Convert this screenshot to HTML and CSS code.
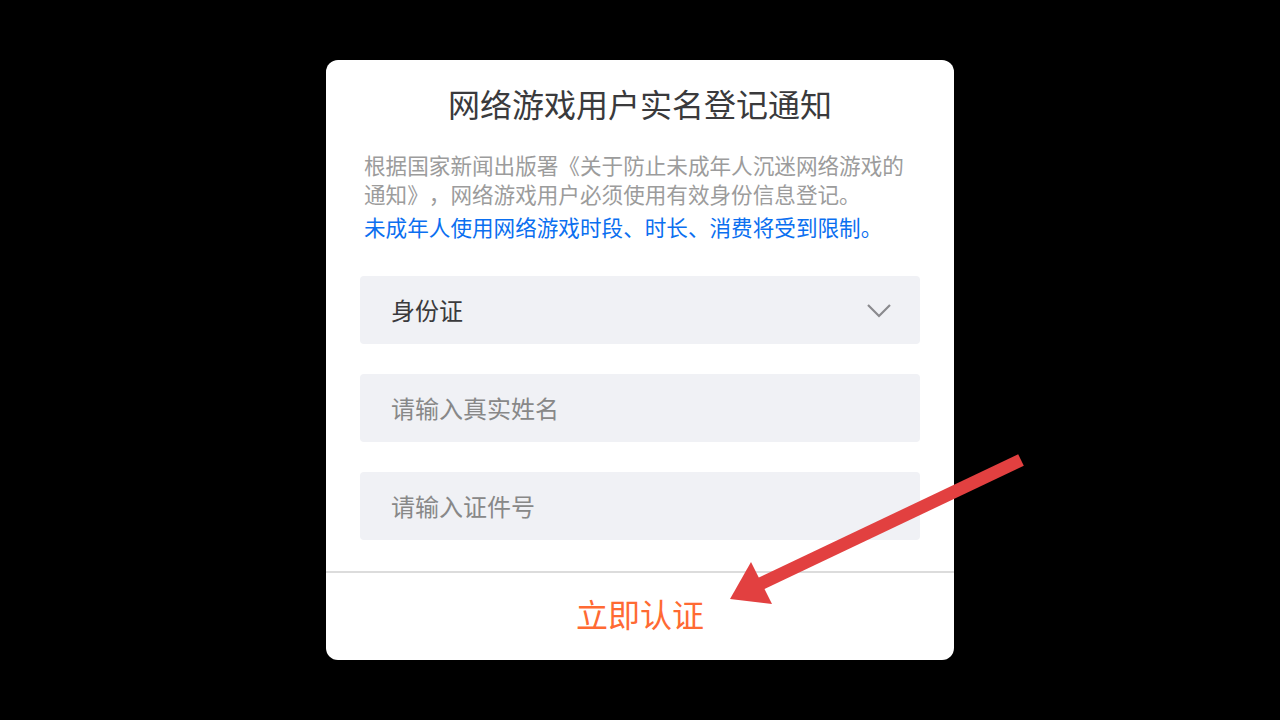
FILE: index.html
```html
<!DOCTYPE html>
<html lang="zh-CN">
<head>
  <meta charset="UTF-8" />
  <meta name="viewport" content="width=device-width, initial-scale=1.0"/>
  <title>实名登记</title>
  <link rel="stylesheet" href="styles.css">
</head>
<body>
  <div class="modal">
    <h1 class="title">网络游戏用户实名登记通知</h1>

    <div class="notice">
      <p class="notice-text">根据国家新闻出版署《关于防止未成年人沉迷网络游戏的通知》，网络游戏用户必须使用有效身份信息登记。</p>
      <p class="notice-warn">未成年人使用网络游戏时段、时长、消费将受到限制。</p>
    </div>

    <form class="form">
      <div class="field select">
        <span>身份证</span>
        <svg class="chevron" width="26" height="16" viewBox="0 0 26 16">
          <path d="M2 3 L13 14 L24 3" fill="none" stroke="#8a8a8e" stroke-width="2.2"/>
        </svg>
      </div>
      <input class="field" type="text" placeholder="请输入真实姓名" />
      <input class="field" type="text" placeholder="请输入证件号" />
    </form>

    <div class="footer">
      <button class="submit" type="button">立即认证</button>
    </div>
  </div>

  <!-- annotation arrow -->
  <svg class="arrow" width="1280" height="720" viewBox="0 0 1280 720">
    <line x1="1021" y1="460" x2="758" y2="585" stroke="#e24040" stroke-width="13"/>
    <polygon points="730,599 751,562 772,604" fill="#e24040"/>
  </svg>
</body>
</html>
```

FILE: styles.css
```css
:root {
  --text: #3a3a3c;
  --faint: #9c9c9c;
  --blue: #0b6ff0;
  --orange: #ff6a33;
  --field-bg: #f0f1f5;
  --font-body: 'Noto Sans CJK SC', 'Noto Sans', sans-serif;
}

html, body {
  margin: 0;
  padding: 0;
  height: 100%;
  background: #000;
  font-family: var(--font-body);
}

body {
  display: flex;
  justify-content: center;
  padding-top: 60px;
  box-sizing: border-box;
}

.modal {
  width: 628px;
  height: 600px;
  background: #fff;
  border-radius: 12px;
  overflow: hidden;
  display: flex;
  flex-direction: column;
}

.title {
  margin: 20px 0 0;
  font-size: 32px;
  font-weight: 400;
  line-height: 46px;
  text-align: center;
  color: var(--text);
}

.notice {
  padding: 0 38px;
  margin-top: 24px;
  font-size: 21.6px;
  line-height: 29px;
  text-spacing-trim: space-all;
}

.notice p {
  margin: 0;
}

.notice-text {
  color: var(--faint);
}

.notice-warn {
  margin-top: 4px !important;
  color: var(--blue);
}

.form {
  display: flex;
  flex-direction: column;
  gap: 30px;
  padding: 0 34px;
  margin: 35px 0 31px;
}

.field {
  height: 68px;
  box-sizing: border-box;
  padding: 0 28px 2px 31px;
  border: none;
  border-radius: 4px;
  background: var(--field-bg);
  font-family: var(--font-body);
  font-size: 24px;
  color: var(--text);
  outline: none;
}

.field::placeholder {
  color: #888;
}

.select {
  display: flex;
  align-items: center;
  justify-content: space-between;
}

.chevron {
  display: block;
  margin-top: 2px;
}

.footer {
  flex: 1;
  border-top: 2px solid #dcdcdc;
  display: flex;
  align-items: center;
  justify-content: center;
  padding-bottom: 7px;
}

.submit {
  border: none;
  background: none;
  padding: 0;
  font-family: var(--font-body);
  font-size: 32px;
  color: var(--orange);
}

.arrow {
  position: fixed;
  top: 0;
  left: 0;
  pointer-events: none;
}
```
